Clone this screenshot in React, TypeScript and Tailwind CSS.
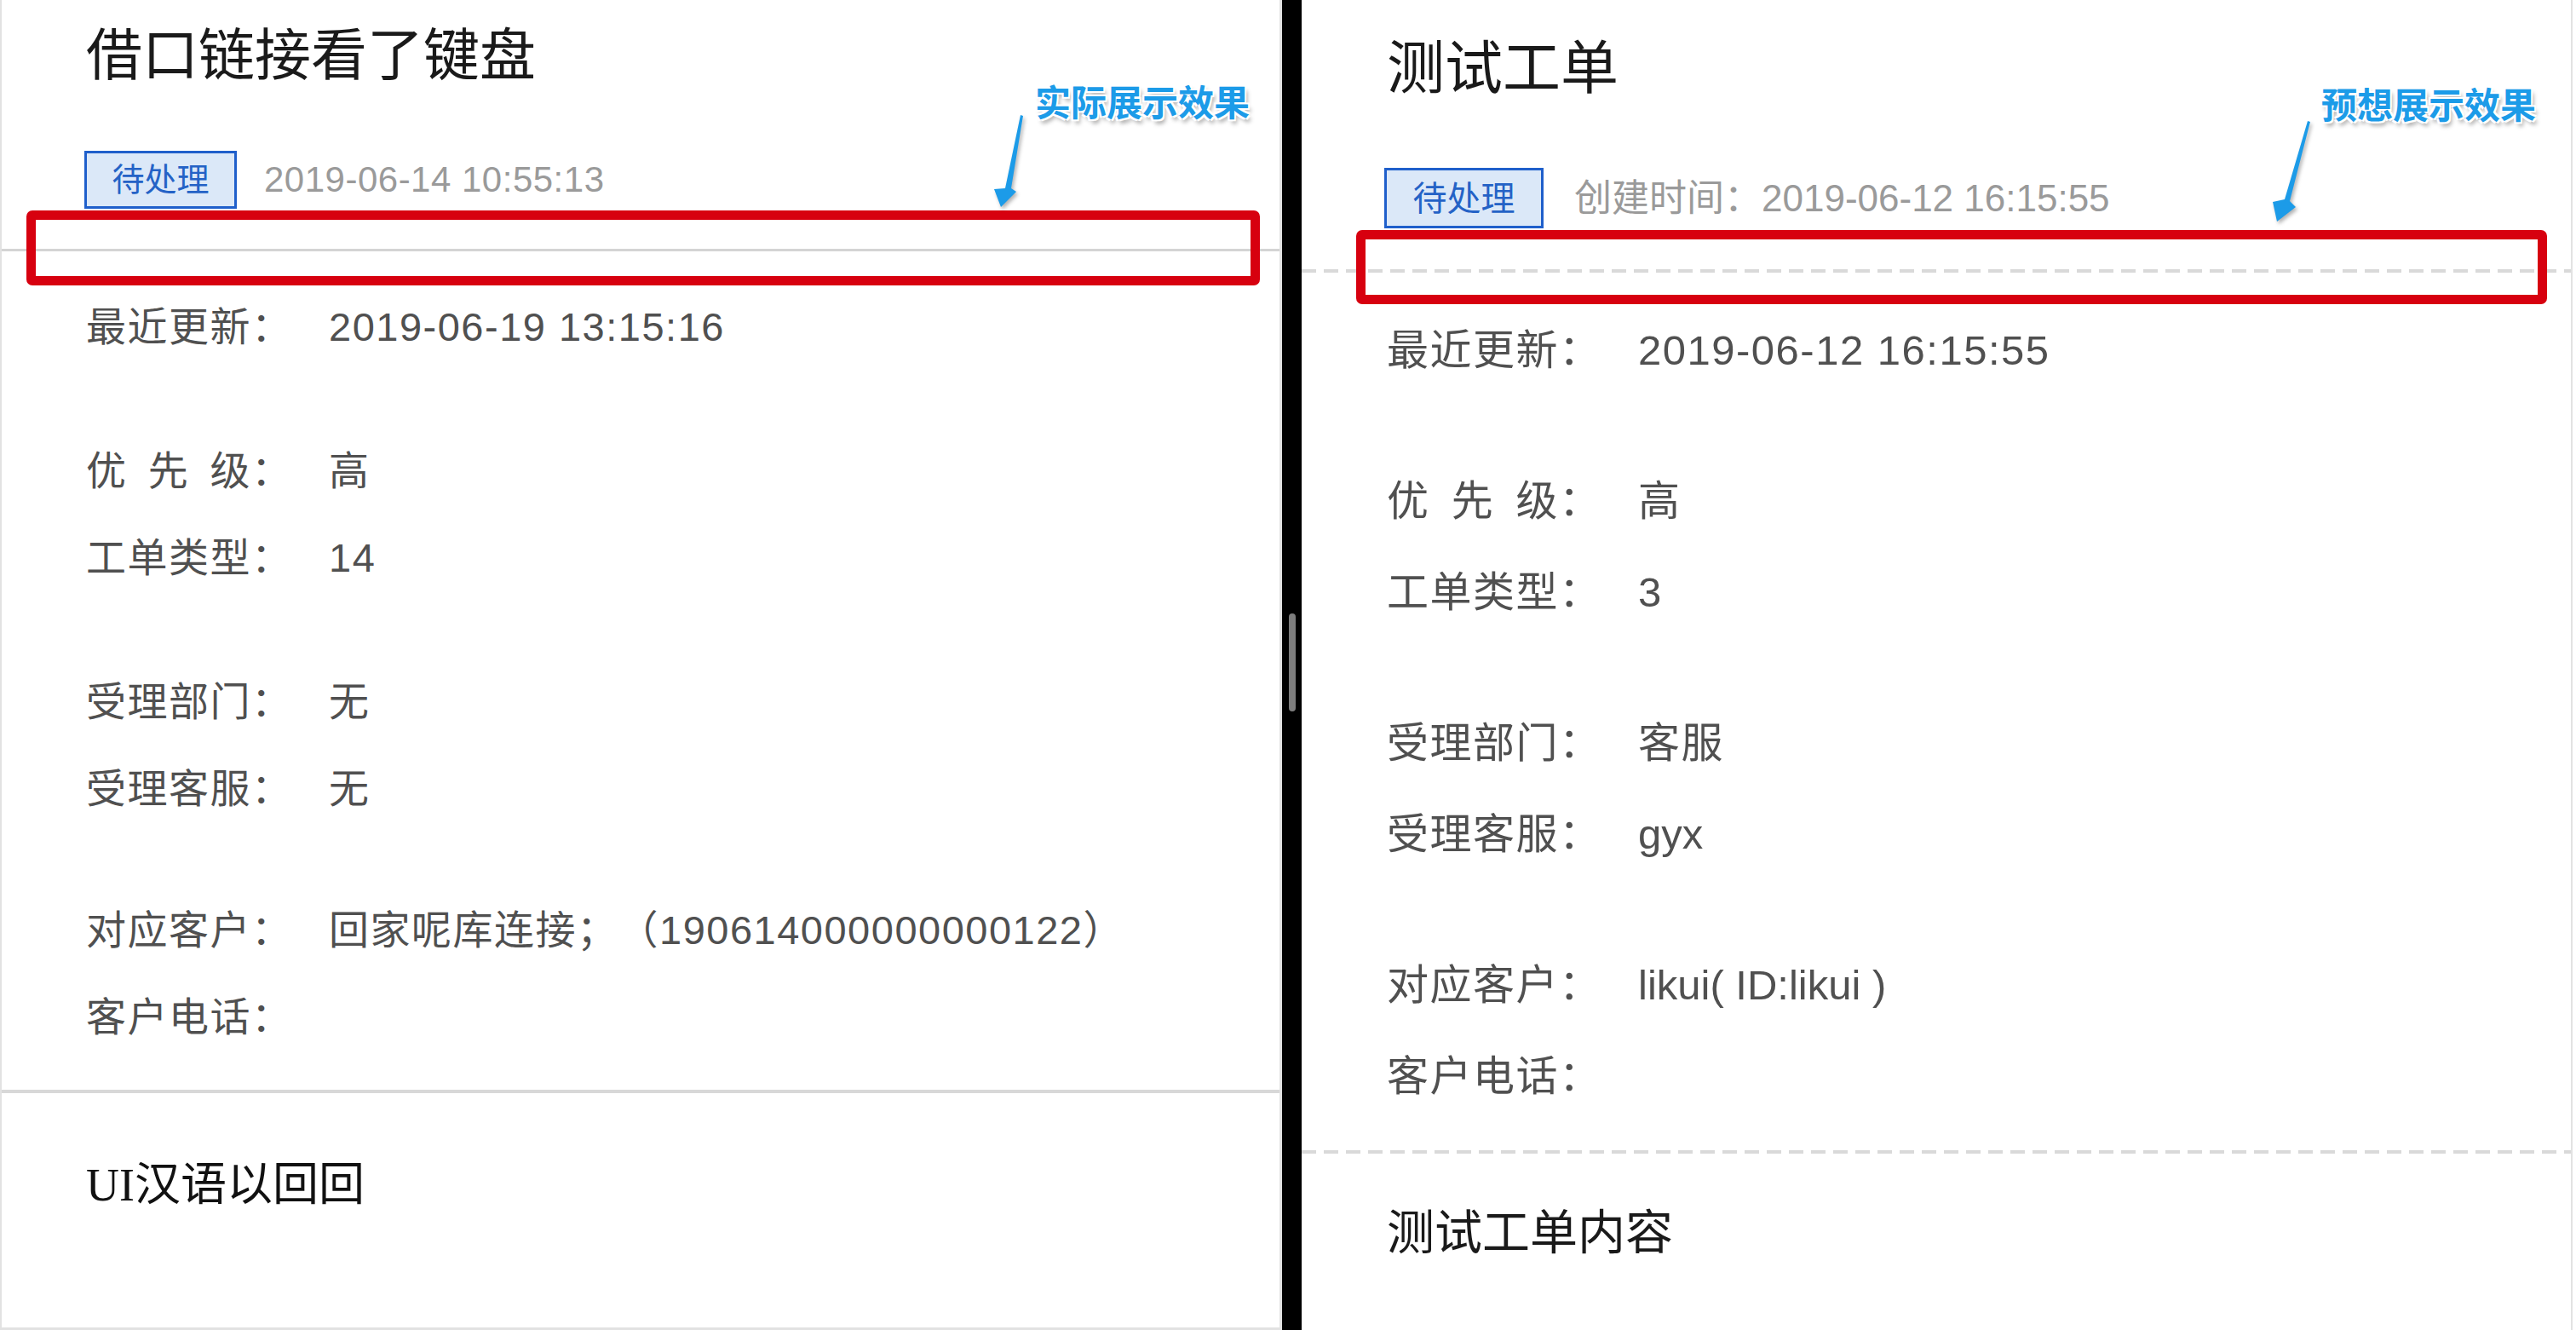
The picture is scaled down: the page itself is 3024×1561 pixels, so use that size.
type Size = 'a' | 'b'

const sizes = {
  a: { row: 'h-[102px]', text: 'text-[47px]', label: 'w-[285px]', spread: 'w-[194px]' },
  b: { row: 'h-[107px]', text: 'text-[49px]', label: 'w-[295px]', spread: 'w-[202px]' },
}

function Field({
  label,
  value,
  size,
  spread,
  plain,
}: {
  label: string
  value?: string
  size: Size
  spread?: boolean
  plain?: boolean
}) {
  const s = sizes[size]
  return (
    <div
      className={`flex items-center ${s.row} ${s.text} leading-none tracking-[1.5px] text-[#505050] [text-spacing-trim:space-all]`}
    >
      <div className={`flex shrink-0 ${s.label}`}>
        {spread ? (
          <span className={`flex justify-between ${s.spread}`}>
            {label.split('').map((c) => (
              <span key={c}>{c}</span>
            ))}
          </span>
        ) : (
          <span>{label}</span>
        )}
        <span>：</span>
      </div>
      {value && <span className={`whitespace-nowrap ${plain ? 'tracking-normal' : ''}`}>{value}</span>}
    </div>
  )
}

function Arrow({ className, points }: { className: string; points: string }) {
  return (
    <svg className={`absolute drop-shadow-[2px_3px_2px_rgba(0,0,0,0.3)] ${className}`} viewBox="0 0 80 140">
      <polygon points={points} fill="#1c9be8" />
    </svg>
  )
}

const callout =
  "absolute text-[42px] leading-none font-bold text-[#1c9be8] font-['Noto_Sans_CJK_SC',sans-serif] [text-shadow:0_0_2px_#fff,2px_2px_0_#fff,-2px_-2px_0_#fff,2px_-2px_0_#fff,-2px_2px_0_#fff,3px_5px_5px_rgba(0,0,0,0.35)]"

export default function App() {
  return (
    <div className="relative flex w-[3024px] h-[1561px] bg-white font-['Liberation_Sans','Noto_Sans_CJK_SC',sans-serif]">
      {/* Left: actual result */}
      <div className="w-[1505px] shrink-0 flex flex-col border-l-2 border-r-[3px] border-b-[3px] border-[#e2e2e2]">
        <div className="h-[130px] flex items-center pl-[99px] text-[66px] leading-none text-[#1a1a1a]">借口链接看了键盘</div>
        <div className="h-[162px] flex items-center gap-[32px] pl-[97px]">
          <div className="w-[179px] h-[68px] flex items-center justify-center border-[3px] border-[#1f5fcb] bg-[#dbe8f8] text-[38px] leading-none text-[#2462c6]">
            待处理
          </div>
          <span className="text-[42px] leading-none tracking-[0.5px] text-[#9a9a9a]">2019-06-14 10:55:13</span>
        </div>
        <div className="h-[3px] bg-[#d4d4d4]" />
        <div className="flex flex-col gap-[67px] pt-[37px] pb-[35px] pl-[99px]">
          <Field size="a" label="最近更新" value="2019-06-19 13:15:16" />
          <div className="flex flex-col">
            <Field size="a" label="优先级" value="高" spread />
            <Field size="a" label="工单类型" value="14" />
          </div>
          <div className="flex flex-col">
            <Field size="a" label="受理部门" value="无" />
            <Field size="a" label="受理客服" value="无" />
          </div>
          <div className="flex flex-col -mt-[3px]">
            <Field size="a" label="对应客户" value="回家呢库连接；（190614000000000122）" />
            <Field size="a" label="客户电话" />
          </div>
        </div>
        <div className="h-[4px] bg-[#d8d8d8]" />
        <div className="h-[216px] flex items-center pl-[99px] text-[54px] leading-none text-[#111] font-['Liberation_Serif','Noto_Sans_CJK_SC',serif]">
          UI汉语以回回
        </div>
      </div>

      {/* Divider with scroll thumb */}
      <div className="w-[23px] shrink-0 bg-black flex justify-center pt-[720px]">
        <div className="w-[8px] h-[115px] rounded-full bg-[#7d7d7d]" />
      </div>

      {/* Right: expected result */}
      <div className="w-[1492px] shrink-0 flex flex-col border-r-2 border-[#e2e2e2]">
        <div className="h-[160px] flex items-center pl-[100px] text-[68px] leading-none text-[#1a1a1a]">测试工单</div>
        <div className="h-[156px] flex items-start gap-[36px] pt-[37px] pl-[97px]">
          <div className="w-[187px] h-[71px] flex items-center justify-center border-[3px] border-[#1f5fcb] bg-[#dbe8f8] text-[40px] leading-none text-[#2462c6]">
            待处理
          </div>
          <span className="h-[71px] flex items-center text-[44px] leading-none text-[#9a9a9a]">创建时间：2019-06-12 16:15:55</span>
        </div>
        <div className="h-[4px] bg-[repeating-linear-gradient(90deg,#d9d9d9_0_17px,transparent_17px_26px)]" />
        <div className="flex flex-col gap-[70px] pt-[38px] pb-[33px] pl-[100px]">
          <Field size="b" label="最近更新" value="2019-06-12 16:15:55" />
          <div className="flex flex-col">
            <Field size="b" label="优先级" value="高" spread />
            <Field size="b" label="工单类型" value="3" />
          </div>
          <div className="flex flex-col">
            <Field size="b" label="受理部门" value="客服" />
            <Field size="b" label="受理客服" value="gyx" plain />
          </div>
          <div className="flex flex-col">
            <Field size="b" label="对应客户" value="likui( ID:likui )" plain />
            <Field size="b" label="客户电话" />
          </div>
        </div>
        <div className="h-[4px] bg-[repeating-linear-gradient(90deg,#d9d9d9_0_17px,transparent_17px_26px)]" />
        <div className="h-[186px] flex items-center pl-[100px] text-[56px] leading-none text-[#1a1a1a]">测试工单内容</div>
      </div>

      {/* Annotations */}
      <div className="absolute left-[31px] top-[247px] w-[1448px] h-[88px] border-[11px] border-[#d7000f] rounded-[7px]" />
      <div className="absolute left-[1592px] top-[270px] w-[1398px] h-[87px] border-[11px] border-[#d7000f] rounded-[7px]" />

      <div className={`${callout} left-[1215px] top-[97px]`}>实际展示效果</div>
      <div className={`${callout} left-[2725px] top-[100px]`}>预想展示效果</div>

      <Arrow className="left-[1150px] top-[125px] w-[80px] h-[140px]" points="48,10 51,11 37,96 43,100 25,118 17,97 30,96" />
      <Arrow className="left-[2650px] top-[130px] w-[80px] h-[140px]" points="59,12 62,13 38,106 45,113 23,130 18,107 32,104" />
    </div>
  )
}
